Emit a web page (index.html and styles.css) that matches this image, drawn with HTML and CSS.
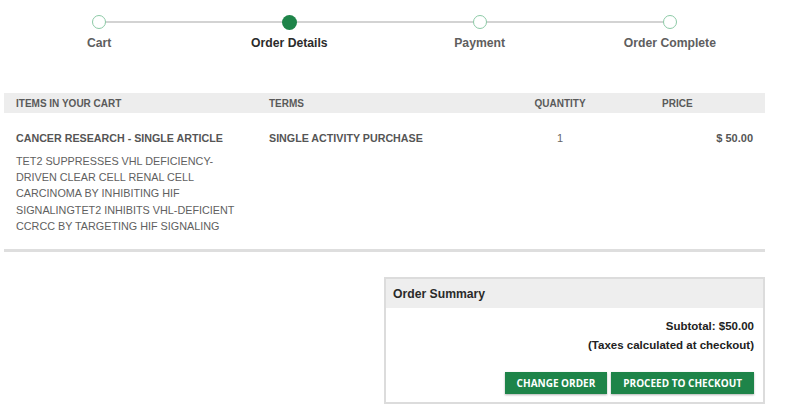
FILE: index.html
```html
<!DOCTYPE html>
<html>
<head>
<meta charset="utf-8">
<link rel="stylesheet" href="styles.css">
</head>
<body>
<div class="page">
  <div class="stepper">
    <div class="rail"></div>
    <div class="step"><span class="dot"></span><span class="label">Cart</span></div>
    <div class="step active"><span class="dot"></span><span class="label">Order Details</span></div>
    <div class="step"><span class="dot"></span><span class="label">Payment</span></div>
    <div class="step"><span class="dot"></span><span class="label">Order Complete</span></div>
  </div>

  <div class="cart">
    <div class="cart-head">
      <div class="c-item">ITEMS IN YOUR CART</div>
      <div class="c-terms">TERMS</div>
      <div class="c-qty">QUANTITY</div>
      <div class="c-price">PRICE</div>
    </div>
    <div class="cart-row">
      <div class="c-item">
        <div class="title">CANCER RESEARCH - SINGLE ARTICLE</div>
        <div class="desc">TET2 SUPPRESSES VHL DEFICIENCY-DRIVEN CLEAR CELL RENAL CELL CARCINOMA BY INHIBITING HIF SIGNALINGTET2 INHIBITS VHL-DEFICIENT CCRCC BY TARGETING HIF SIGNALING</div>
      </div>
      <div class="c-terms title">SINGLE ACTIVITY PURCHASE</div>
      <div class="c-qty qty">1</div>
      <div class="c-price price">$ 50.00</div>
    </div>
  </div>

  <div class="summary-wrap">
    <div class="summary">
      <div class="summary-head">Order Summary</div>
      <div class="summary-body">
        <div class="subtotal">Subtotal: $50.00</div>
        <div class="taxes">(Taxes calculated at checkout)</div>
        <div class="actions">
          <button class="btn">CHANGE ORDER</button>
          <button class="btn">PROCEED TO CHECKOUT</button>
        </div>
      </div>
    </div>
  </div>
</div>
</body>
</html>
```

FILE: styles.css
```css
* { box-sizing: border-box; }
html, body { margin: 0; padding: 0; background: #fff; }
body { font-family: "Liberation Sans", Arial, sans-serif; color: #555; }
.page { width: 761px; margin-left: 4px; }

.stepper {
  position: relative;
  display: grid;
  grid-template-columns: repeat(4, 1fr);
  padding-top: 15px;
}
.rail {
  position: absolute;
  top: 21px;
  left: 95px;
  right: 95px;
  height: 2px;
  background: #d3d3d3;
}
.step {
  position: relative;
  display: flex;
  flex-direction: column;
  align-items: center;
}
.dot {
  width: 14px;
  height: 14px;
  border-radius: 50%;
  border: 1px solid #8ccaa6;
  background: #fff;
}
.step.active .dot {
  width: 15px;
  height: 15px;
  margin-top: -0.5px;
  margin-bottom: -0.5px;
  border: none;
  background: #1e8449;
}
.label {
  margin-top: 7px;
  font-size: 12.2px;
  font-weight: bold;
  line-height: 14px;
  color: #5e5e5e;
}
.step.active .label { color: #2b2b2b; }

.cart { margin-top: 43px; border-bottom: 3px solid #dedede; }
.cart-head, .cart-row {
  display: grid;
  grid-template-columns: 253px 238px 106px 1fr;
  padding-left: 12px;
}
.cart-head {
  background: #ededed;
  height: 20px;
  align-items: center;
  font-size: 10px;
  font-weight: bold;
  color: #5a5a5a;
}
.cart-head .c-qty { text-align: center; }
.cart-head .c-price { padding-left: 49px; }
.cart-row { padding-top: 17px; padding-bottom: 15px; }
.cart-row .c-item { padding-right: 18px; }
.title {
  font-size: 10.7px;
  font-weight: bold;
  line-height: 16px;
  color: #555;
}
.desc {
  margin-top: 7px;
  font-size: 10.8px;
  line-height: 16.2px;
  color: #606060;
}
.qty { text-align: center; font-size: 11px; line-height: 16px; color: #666; }
.price { text-align: right; padding-right: 12px; font-size: 11px; font-weight: bold; line-height: 16px; color: #555; }

.summary-wrap { display: flex; justify-content: flex-end; margin-top: 25px; }
.summary {
  width: 381px;
  border: 2px solid #dcdcdc;
}
.summary-head {
  background: #eeeeee;
  height: 29px;
  display: flex;
  align-items: center;
  padding-left: 7px;
  font-size: 12.2px;
  font-weight: bold;
  color: #2a2a2a;
}
.summary-body {
  padding: 10px 9px 8px 10px;
  text-align: right;
  color: #222;
  font-weight: bold;
  font-size: 11.5px;
}
.subtotal { line-height: 16px; }
.taxes { line-height: 16px; margin-top: 3px; }
.actions {
  display: flex;
  justify-content: flex-end;
  gap: 4px;
  margin-top: 19px;
}
.btn {
  height: 22px;
  border: none;
  background: #1e8449;
  color: #fff;
  font-family: "Open Sans", "Liberation Sans", sans-serif;
  font-weight: 700;
  font-size: 10px;
  padding: 0 12px;
  box-shadow: 0 1px 2px rgba(0,0,0,0.3);
}
```
